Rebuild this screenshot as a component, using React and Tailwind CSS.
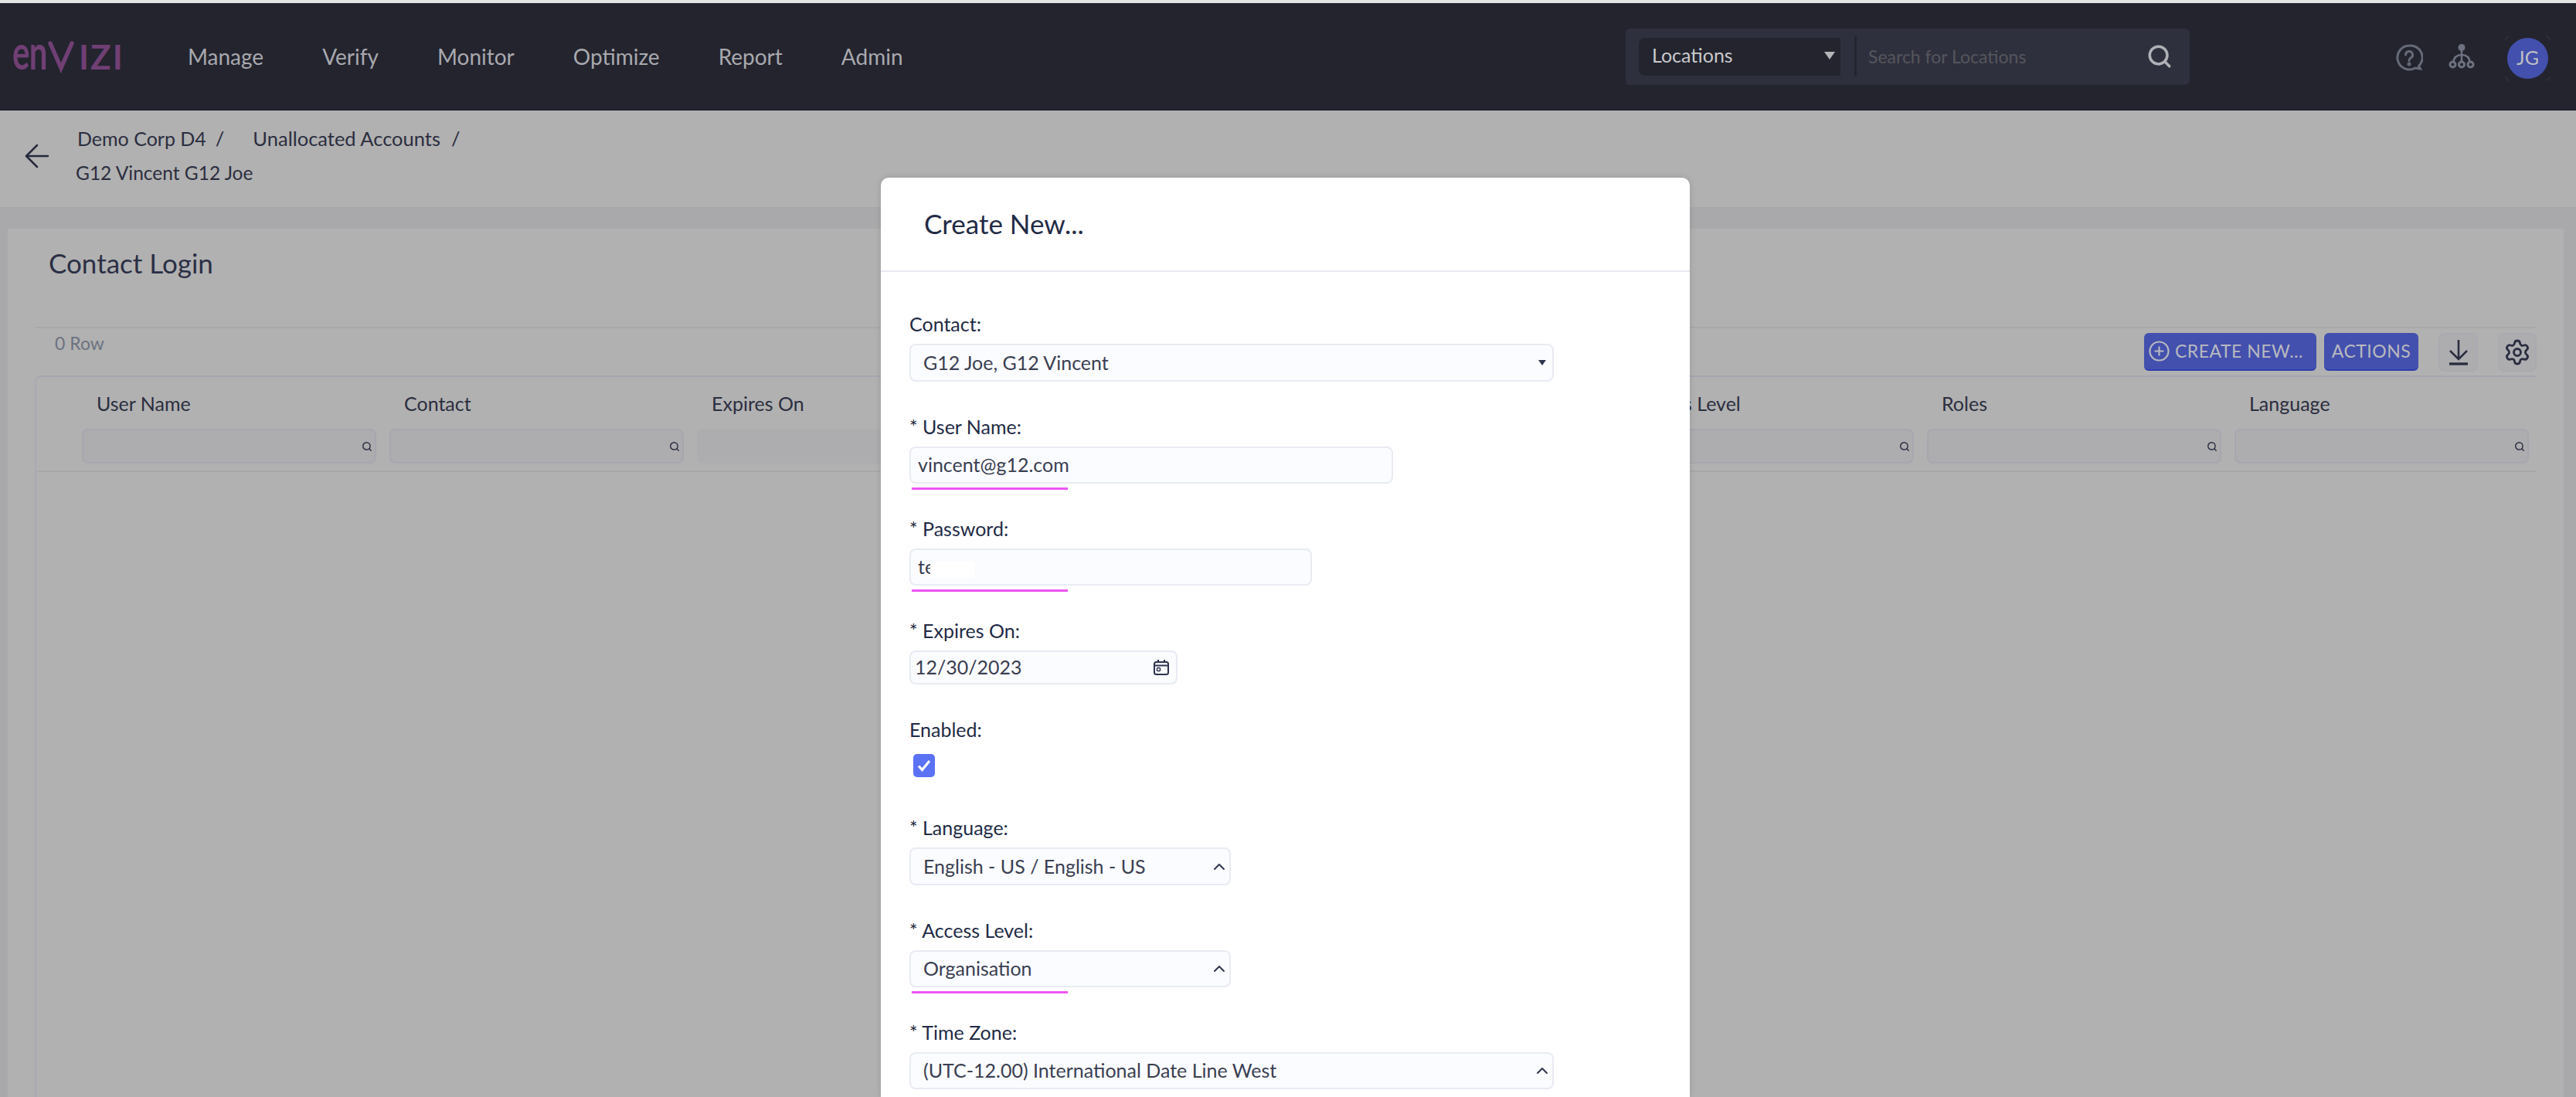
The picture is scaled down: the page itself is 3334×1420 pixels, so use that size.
import { ArrowLeft, ChevronUp, Search, Settings } from 'lucide-react';

const navItems = ['Manage', 'Verify', 'Monitor', 'Optimize', 'Report', 'Admin'];

const columns = [
  { label: 'User Name', filter: true },
  { label: 'Contact', filter: true },
  { label: 'Expires On', filter: false },
  { label: '', filter: false },
  { label: '', filter: false },
  { label: 'Access Level', filter: true },
  { label: 'Roles', filter: true },
  { label: 'Language', filter: true },
];

function Field({ label, children }) {
  return (
    <div>
      <div className="h-[28px] mb-[12px] text-[25px] leading-[28px] text-[#222b45]">{label}</div>
      {children}
    </div>
  );
}

function Marker() {
  return <div className="absolute left-[1px] top-[calc(100%+7px)] w-[202px] h-[3px] bg-[#ee55f2]" />;
}

function SelectBox({ width, height, value, caret, marked }) {
  return (
    <div className={`relative flex items-center justify-between pl-[16px] pr-[1px] border-2 border-[#e9ebf3] bg-[#fbfcff] rounded-[8px] text-[25px] text-[#3a3f52] ${width} ${height}`}>
      <span>{value}</span>
      {caret === 'down' ? (
        <svg width="12" height="9" viewBox="0 0 12 9" className="mr-[6px]">
          <path d="M1 1h10L6 8z" fill="#30364f" />
        </svg>
      ) : (
        <ChevronUp size={24} strokeWidth={2} className="text-[#30364f]" />
      )}
      {marked && <Marker />}
    </div>
  );
}

function TextBox({ width, value, marked, children }) {
  return (
    <div className={`relative flex items-center pl-[9px] h-[48px] border-2 border-[#e9ebf3] bg-[#fbfcff] rounded-[8px] text-[25px] text-[#3a3f52] ${width}`}>
      {value}
      {children}
      {marked && <Marker />}
    </div>
  );
}

export default function App() {
  return (
    <div className="relative w-[3334px] h-[1420px] overflow-hidden bg-[#a9a9ab] font-['Lato',sans-serif]">
      <div className="h-[4px] bg-[#e4e4e4]" />

      {/* top bar */}
      <header className="flex items-center h-[139px] pl-[16px] pr-[36px] bg-[#23242e] border-b border-[#14152a]">
        <div className="flex items-center shrink-0 w-[142px] h-[60px] text-[#703f74] font-bold leading-none">
          <span className="block shrink-0 w-[46px] origin-left scale-x-[0.68] text-[62px] -mt-[14px] tracking-[-1px]">en</span>
          <svg width="34" height="42" viewBox="0 0 34 42" className="shrink-0 mt-[1px]">
            <path d="M3 3l14 32L31 3" fill="none" stroke="#703f74" strokeWidth="5.5" strokeLinecap="round" />
            <path d="M13 30h8L17 42z" fill="#703f74" />
          </svg>
          <span className="shrink-0 ml-[6px] text-[44px] tracking-[2px]">IZI</span>
        </div>

        <nav className="flex gap-[76px] ml-[85px] text-[28px] text-[#a9a9ae]">
          {navItems.map((item) => (
            <span key={item}>{item}</span>
          ))}
        </nav>

        <div className="flex items-center ml-auto w-[730px] h-[73px] pl-[17px] bg-[#2f303e] rounded-[6px]">
          <div className="flex items-center justify-between w-[261px] h-[49px] pl-[17px] pr-[7px] pb-[3px] bg-[#23242e] rounded-l-[8px] text-[25px] text-[#c9c9cc]">
            <span>Locations</span>
            <svg width="14" height="10" viewBox="0 0 14 10">
              <path d="M0 0h14L7 10z" fill="#b5b5b8" />
            </svg>
          </div>
          <div className="w-[3px] h-[52px] ml-[18px] bg-[#23242e]" />
          <span className="ml-[15px] text-[23px] text-[#55565c]">Search for Locations</span>
          <Search size={34} strokeWidth={2.5} className="ml-auto mr-[22px] text-[#b0b1b6]" />
        </div>

        <svg width="36" height="36" viewBox="0 0 36 36" fill="none" className="ml-[266px] mt-[4px] text-[#666a78]" stroke="currentColor" strokeWidth="3">
          <path d="M18 2a15.5 15.5 0 1 0 8 29l6.5 1-2-3.5A15.5 15.5 0 0 0 18 2z" />
          <path d="M13.5 14a4.5 4.5 0 1 1 6.5 4c-1.5.8-2 1.6-2 3.5" strokeLinecap="round" />
          <circle cx="18" cy="26" r="1" fill="currentColor" />
        </svg>
        <svg width="34" height="34" viewBox="0 0 34 34" fill="none" className="ml-[33px] text-[#6e7280]" stroke="currentColor" strokeWidth="3">
          <circle cx="17" cy="5.5" r="4.5" fill="currentColor" stroke="none" />
          <path d="M17 8v17M17 15c-6 0-10 3-11 10M17 15c6 0 10 3 11 10" strokeWidth="2.5" />
          <circle cx="5.5" cy="27.5" r="3.5" fill="#23242e" />
          <circle cx="17" cy="27.5" r="3.5" fill="#23242e" />
          <circle cx="28.5" cy="27.5" r="3.5" fill="#23242e" />
        </svg>
        <div className="relative flex items-center justify-center w-[53px] h-[53px] ml-[42px] mt-[4px] rounded-full bg-[#4350ad] text-[25px] text-[#bfbfc4]">
          JG
          <svg width="59" height="59" viewBox="0 0 59 59" fill="none" stroke="#3a3b47" strokeWidth="1" className="absolute -left-[3px] -top-[3px]">
            <path d="M1 6a5 5 0 0 1 5-5M53 1a5 5 0 0 1 5 5M58 53a5 5 0 0 1-5 5M6 58a5 5 0 0 1-5-5" />
          </svg>
        </div>
      </header>

      {/* breadcrumb */}
      <div className="flex items-center h-[125px] pl-[34px] bg-[#b1b1b1] text-[#2b2e40] text-[25.5px]">
        <ArrowLeft size={48} strokeWidth={1.25} className="-ml-[10px] -mt-[8px] shrink-0 text-[#262a3c]" />
        <div className="ml-[26px] -mt-[8px]">
          <div className="flex items-center h-[44px]">
            <span className="ml-[2px] text-[25px]">Demo Corp D4</span>
            <span className="ml-[12px]">/</span>
            <span className="ml-[37px]">Unallocated Accounts</span>
            <span className="ml-[14px]">/</span>
          </div>
          <div className="h-[44px] text-[24.5px] leading-[44px]">G12 Vincent G12 Joe</div>
        </div>
      </div>

      {/* card */}
      <main className="h-[1124px] mt-[28px] ml-[10px] mr-[16px] bg-[#b1b1b1] px-[35px] text-[#2b2e40]">
        <div className="flex items-center h-[127px] pl-[18px] pb-[39px] text-[35px] text-[#2b2f45]">Contact Login</div>

        <div className="flex items-center justify-between h-[63px] border-t-2 border-[#a9a9ab] pl-[26px]">
          <span className="-mt-[23px] text-[23px] text-[#6c7280]">0 Row</span>
          <div className="flex items-center">
            <button className="flex items-center w-[223px] h-[49px] pl-[6px] gap-[7px] bg-[#4350ad] border-b-2 border-[#2f3eb0] rounded-[6px] text-[23px] text-[#b8b9c0] tracking-[0.5px]">
              <svg width="27" height="27" viewBox="0 0 27 27" fill="none" stroke="currentColor" strokeWidth="2.2">
                <circle cx="13.5" cy="13.5" r="12" />
                <path d="M13.5 7.5v12M7.5 13.5h12" />
              </svg>
              CREATE NEW...
            </button>
            <button className="w-[122px] h-[49px] ml-[10px] bg-[#4350ad] border-b-2 border-[#2f3eb0] rounded-[6px] text-[23px] text-[#b8b9c0] tracking-[0.5px]">ACTIONS</button>
            <button className="flex items-center justify-center w-[51px] h-[50px] ml-[26px] border-2 border-[#a9aab0] bg-[#adadb0] rounded-[8px]">
              <svg width="26" height="34" viewBox="0 0 26 34" fill="none" stroke="#2b2e40" strokeWidth="2.6">
                <path d="M13 1v24M2 15l11 11 11-11" />
                <path d="M1 32h24" strokeWidth="3.4" />
              </svg>
            </button>
            <button className="flex items-center justify-center w-[50px] h-[50px] ml-[26px] border-2 border-[#a9aab0] bg-[#adadb0] rounded-[8px]">
              <Settings size={36} strokeWidth={1.9} className="text-[#2b2e40]" />
            </button>
          </div>
        </div>

        <div className="h-[1000px] border-l-2 border-[#a9aab2] rounded-tl-[8px]">
          <div className="grid grid-cols-8 gap-x-[17px] h-[125px] pl-[59px] pr-[10px] border-t-2 border-b-2 border-t-[#a4a5b0] border-b-[#a7a7a9] rounded-tl-[8px]">
            {columns.map((col, i) => (
              <div key={i}>
                <div className="h-[67px] pt-[19px] pl-[19px] text-[25px] leading-[30px] whitespace-nowrap">{col.label}</div>
                <div className={`flex items-center justify-end h-[45px] pr-[3px] rounded-[8px] bg-[#adadb0] border-2 ${col.filter ? 'border-[#a6a7af]' : 'border-[#adadb0]'}`}>
                  {col.filter && <Search size={14} strokeWidth={2.5} className="text-[#2b2e40]" />}
                </div>
              </div>
            ))}
          </div>
        </div>
      </main>

      {/* create dialog */}
      <div className="absolute left-[1140px] top-[230px] bottom-0 w-[1047px] bg-white rounded-t-[10px] shadow-[0_0_8px_rgba(0,0,0,0.12)]">
        <div className="flex items-center h-[122px] pl-[56px] pb-[2px] border-b-2 border-[#e6e9f3] text-[35px] text-[#222b45]">Create New...</div>

        <div className="flex flex-col gap-[44px] pt-[53px] pl-[37px]">
          <Field label="Contact:">
            <SelectBox width="w-[834px]" height="h-[49px]" value="G12 Joe, G12 Vincent" caret="down" />
          </Field>
          <Field label="* User Name:">
            <TextBox width="w-[626px]" value="vincent@g12.com" marked />
          </Field>
          <Field label="* Password:">
            <TextBox width="w-[521px]" value="te" marked>
              <div className="absolute left-[25px] top-[15px] w-[58px] h-[21px] bg-white" />
            </TextBox>
          </Field>
          <Field label="* Expires On:">
            <div className="flex items-center justify-between w-[347px] h-[44px] pl-[5px] pr-[9px] border-2 border-[#e9ebf3] bg-[#fbfcff] rounded-[8px] text-[25px] text-[#3a3f52]">
              12/30/2023
              <svg width="20" height="20" viewBox="0 0 20 20" fill="none" stroke="#2d3250" strokeWidth="2">
                <rect x="1" y="3" width="18" height="16" rx="2.5" />
                <path d="M1 7.5h18M6 0v3M14 0v3" />
                <rect x="4.5" y="10.5" width="4" height="4" rx="1" strokeWidth="1.5" />
              </svg>
            </div>
          </Field>
          <Field label="Enabled:">
            <div className="flex items-center justify-center w-[28px] h-[30px] mt-[18px] ml-[5px] mb-[7px] bg-[#5b72f5] rounded-[5px]">
              <svg width="18" height="16" viewBox="0 0 18 16" fill="none" stroke="white" strokeWidth="3.2">
                <path d="M2 8.5l4.5 5L16 2" />
              </svg>
            </div>
          </Field>
          <Field label="* Language:">
            <SelectBox width="w-[416px]" height="h-[49px]" value="English - US / English - US" caret="up" />
          </Field>
          <Field label="* Access Level:">
            <SelectBox width="w-[416px]" height="h-[48px]" value="Organisation" caret="up" marked />
          </Field>
          <Field label="* Time Zone:">
            <SelectBox width="w-[834px]" height="h-[48px]" value="(UTC-12.00) International Date Line West" caret="up" />
          </Field>
        </div>
      </div>
    </div>
  );
}
